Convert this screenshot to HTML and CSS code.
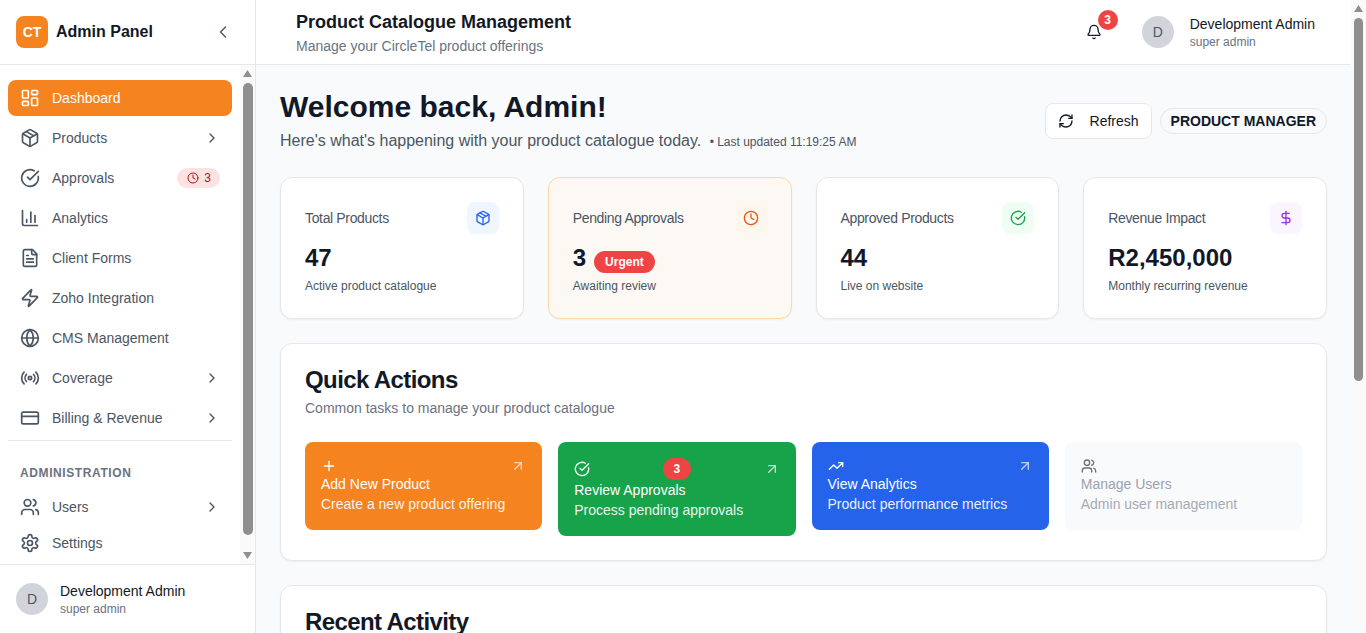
FILE: index.html
```html
<!DOCTYPE html>
<html lang="en">
<head>
  <meta charset="UTF-8">
  <title>Product Catalogue Management</title>
  <link rel="stylesheet" href="styles.css">
</head>
<body>
  <svg class="sprite" xmlns="http://www.w3.org/2000/svg">
    <symbol id="i-dashboard" viewBox="0 0 24 24"><rect x="3" y="3" width="7" height="9" rx="1"/><rect x="14" y="3" width="7" height="5" rx="1"/><rect x="14" y="12" width="7" height="9" rx="1"/><rect x="3" y="16" width="7" height="5" rx="1"/></symbol>
    <symbol id="i-package" viewBox="0 0 24 24"><path d="M11 21.73a2 2 0 0 0 2 0l7-4A2 2 0 0 0 21 16V8a2 2 0 0 0-1-1.73l-7-4a2 2 0 0 0-2 0l-7 4A2 2 0 0 0 3 8v8a2 2 0 0 0 1 1.73z"/><path d="M12 22V12"/><path d="M3.29 7 12 12l8.71-5"/><path d="m7.5 4.27 9 5.15"/></symbol>
    <symbol id="i-check" viewBox="0 0 24 24"><path d="M21.801 10A10 10 0 1 1 17 3.335"/><path d="m9 11 3 3L22 4"/></symbol>
    <symbol id="i-chart" viewBox="0 0 24 24"><path d="M3 3v16a2 2 0 0 0 2 2h16"/><path d="M18 17V9"/><path d="M13 17V5"/><path d="M8 17v-3"/></symbol>
    <symbol id="i-file" viewBox="0 0 24 24"><path d="M15 2H6a2 2 0 0 0-2 2v16a2 2 0 0 0 2 2h12a2 2 0 0 0 2-2V7Z"/><path d="M14 2v4a2 2 0 0 0 2 2h4"/><path d="M10 9H8"/><path d="M16 13H8"/><path d="M16 17H8"/></symbol>
    <symbol id="i-zap" viewBox="0 0 24 24"><path d="M4 14a1 1 0 0 1-.78-1.63l9.9-10.2a.5.5 0 0 1 .86.46l-1.92 6.02A1 1 0 0 0 13 10h7a1 1 0 0 1 .78 1.63l-9.9 10.2a.5.5 0 0 1-.86-.46l1.92-6.02A1 1 0 0 0 11 14z"/></symbol>
    <symbol id="i-globe" viewBox="0 0 24 24"><circle cx="12" cy="12" r="10"/><path d="M12 2a14.5 14.5 0 0 0 0 20 14.5 14.5 0 0 0 0-20"/><path d="M2 12h20"/></symbol>
    <symbol id="i-radio" viewBox="0 0 24 24"><path d="M4.9 19.1C1 15.2 1 8.8 4.9 4.9"/><path d="M7.8 16.2c-2.3-2.3-2.3-6.1 0-8.5"/><circle cx="12" cy="12" r="2"/><path d="M16.2 7.8c2.3 2.3 2.3 6.1 0 8.5"/><path d="M19.1 4.9C23 8.8 23 15.1 19.1 19"/></symbol>
    <symbol id="i-card" viewBox="0 0 24 24"><rect x="2" y="5" width="20" height="14" rx="2"/><path d="M2 10h20"/></symbol>
    <symbol id="i-users" viewBox="0 0 24 24"><path d="M16 21v-2a4 4 0 0 0-4-4H6a4 4 0 0 0-4 4v2"/><circle cx="9" cy="7" r="4"/><path d="M22 21v-2a4 4 0 0 0-3-3.87"/><path d="M16 3.13a4 4 0 0 1 0 7.75"/></symbol>
    <symbol id="i-settings" viewBox="0 0 24 24"><path d="M12.22 2h-.44a2 2 0 0 0-2 2v.18a2 2 0 0 1-1 1.73l-.43.25a2 2 0 0 1-2 0l-.15-.08a2 2 0 0 0-2.73.73l-.22.38a2 2 0 0 0 .73 2.73l.15.1a2 2 0 0 1 1 1.72v.51a2 2 0 0 1-1 1.74l-.15.09a2 2 0 0 0-.73 2.73l.22.38a2 2 0 0 0 2.73.73l.15-.08a2 2 0 0 1 2 0l.43.25a2 2 0 0 1 1 1.73V20a2 2 0 0 0 2 2h.44a2 2 0 0 0 2-2v-.18a2 2 0 0 1 1-1.73l.43-.25a2 2 0 0 1 2 0l.15.08a2 2 0 0 0 2.73-.73l.22-.39a2 2 0 0 0-.73-2.73l-.15-.08a2 2 0 0 1-1-1.74v-.5a2 2 0 0 1 1-1.74l.15-.09a2 2 0 0 0 .73-2.73l-.22-.38a2 2 0 0 0-2.73-.73l-.15.08a2 2 0 0 1-2 0l-.43-.25a2 2 0 0 1-1-1.73V4a2 2 0 0 0-2-2z"/><circle cx="12" cy="12" r="3"/></symbol>
    <symbol id="i-clock" viewBox="0 0 24 24"><circle cx="12" cy="12" r="10"/><path d="M12 6v6l4 2"/></symbol>
    <symbol id="i-refresh" viewBox="0 0 24 24"><path d="M3 12a9 9 0 0 1 9-9 9.75 9.75 0 0 1 6.74 2.74L21 8"/><path d="M21 3v5h-5"/><path d="M21 12a9 9 0 0 1-9 9 9.75 9.75 0 0 1-6.74-2.74L3 16"/><path d="M8 16H3v5"/></symbol>
    <symbol id="i-bell" viewBox="0 0 24 24"><path d="M10.268 21a2 2 0 0 0 3.464 0"/><path d="M3.262 15.326A1 1 0 0 0 4 17h16a1 1 0 0 0 .74-1.673C19.41 13.956 18 12.499 18 8A6 6 0 0 0 6 8c0 4.499-1.411 5.956-2.738 7.326"/></symbol>
    <symbol id="i-dollar" viewBox="0 0 24 24"><path d="M12 2v20"/><path d="M17 5H9.5a3.5 3.5 0 0 0 0 7h5a3.5 3.5 0 0 1 0 7H6"/></symbol>
    <symbol id="i-trend" viewBox="0 0 24 24"><path d="M22 7l-8.5 8.5-5-5L2 17"/><path d="M16 7h6v6"/></symbol>
    <symbol id="i-arrow" viewBox="0 0 24 24"><path d="M7 7h10v10"/><path d="M7 17 17 7"/></symbol>
    <symbol id="i-plus" viewBox="0 0 24 24"><path d="M5 12h14"/><path d="M12 5v14"/></symbol>
    <symbol id="i-right" viewBox="0 0 24 24"><path d="m9 18 6-6-6-6"/></symbol>
    <symbol id="i-left" viewBox="0 0 24 24"><path d="m15 18-6-6 6-6"/></symbol>
  </svg>

  <div class="app">
    <aside class="sidebar">
      <div class="brand">
        <div class="brand-logo">CT</div>
        <div class="brand-name">Admin Panel</div>
        <svg class="icon brand-toggle"><use href="#i-left"/></svg>
      </div>

      <div class="nav-wrap">
        <nav class="nav">
          <a class="nav-item active"><svg class="icon"><use href="#i-dashboard"/></svg><span class="nav-label">Dashboard</span></a>
          <a class="nav-item"><svg class="icon"><use href="#i-package"/></svg><span class="nav-label">Products</span><svg class="icon nav-more"><use href="#i-right"/></svg></a>
          <a class="nav-item"><svg class="icon"><use href="#i-check"/></svg><span class="nav-label">Approvals</span><span class="nav-badge"><svg class="icon"><use href="#i-clock"/></svg>3</span></a>
          <a class="nav-item"><svg class="icon"><use href="#i-chart"/></svg><span class="nav-label">Analytics</span></a>
          <a class="nav-item"><svg class="icon"><use href="#i-file"/></svg><span class="nav-label">Client Forms</span></a>
          <a class="nav-item"><svg class="icon"><use href="#i-zap"/></svg><span class="nav-label">Zoho Integration</span></a>
          <a class="nav-item"><svg class="icon"><use href="#i-globe"/></svg><span class="nav-label">CMS Management</span></a>
          <a class="nav-item"><svg class="icon"><use href="#i-radio"/></svg><span class="nav-label">Coverage</span><svg class="icon nav-more"><use href="#i-right"/></svg></a>
          <a class="nav-item"><svg class="icon"><use href="#i-card"/></svg><span class="nav-label">Billing &amp; Revenue</span><svg class="icon nav-more"><use href="#i-right"/></svg></a>
          <div class="nav-section">
            <div class="nav-heading">ADMINISTRATION</div>
            <a class="nav-item"><svg class="icon"><use href="#i-users"/></svg><span class="nav-label">Users</span><svg class="icon nav-more"><use href="#i-right"/></svg></a>
            <a class="nav-item"><svg class="icon"><use href="#i-settings"/></svg><span class="nav-label">Settings</span></a>
          </div>
        </nav>
        <div class="scrollbar nav-scrollbar">
          <span class="scroll-up"></span>
          <span class="scroll-thumb"></span>
          <span class="scroll-down"></span>
        </div>
      </div>

      <div class="sidebar-user">
        <div class="avatar">D</div>
        <div>
          <div class="user-name">Development Admin</div>
          <div class="user-role">super admin</div>
        </div>
      </div>
    </aside>

    <div class="main">
      <header class="topbar">
        <div>
          <div class="topbar-title">Product Catalogue Management</div>
          <div class="topbar-sub">Manage your CircleTel product offerings</div>
        </div>
        <div class="topbar-right">
          <div class="bell">
            <svg class="icon"><use href="#i-bell"/></svg>
            <span class="bell-count">3</span>
          </div>
          <div class="topbar-user">
            <div class="avatar">D</div>
            <div>
              <div class="user-name">Development Admin</div>
              <div class="user-role">super admin</div>
            </div>
          </div>
        </div>
      </header>

      <main class="content">
        <section class="welcome">
          <div>
            <h1>Welcome back, Admin!</h1>
            <p class="welcome-sub">Here's what's happening with your product catalogue today. <span class="updated">• Last updated 11:19:25 AM</span></p>
          </div>
          <div class="welcome-actions">
            <button class="refresh"><svg class="icon"><use href="#i-refresh"/></svg>Refresh</button>
            <span class="role-pill">PRODUCT MANAGER</span>
          </div>
        </section>

        <section class="stats">
          <div class="stat">
            <div class="stat-top"><span class="stat-label">Total Products</span><span class="stat-icon blue"><svg class="icon"><use href="#i-package"/></svg></span></div>
            <div class="stat-value">47</div>
            <div class="stat-note">Active product catalogue</div>
          </div>
          <div class="stat pending">
            <div class="stat-top"><span class="stat-label">Pending Approvals</span><span class="stat-icon orange"><svg class="icon"><use href="#i-clock"/></svg></span></div>
            <div class="stat-value">3<span class="urgent">Urgent</span></div>
            <div class="stat-note">Awaiting review</div>
          </div>
          <div class="stat">
            <div class="stat-top"><span class="stat-label">Approved Products</span><span class="stat-icon green"><svg class="icon"><use href="#i-check"/></svg></span></div>
            <div class="stat-value">44</div>
            <div class="stat-note">Live on website</div>
          </div>
          <div class="stat">
            <div class="stat-top"><span class="stat-label">Revenue Impact</span><span class="stat-icon purple"><svg class="icon"><use href="#i-dollar"/></svg></span></div>
            <div class="stat-value">R2,450,000</div>
            <div class="stat-note">Monthly recurring revenue</div>
          </div>
        </section>

        <section class="panel">
          <h2>Quick Actions</h2>
          <p class="panel-sub">Common tasks to manage your product catalogue</p>
          <div class="actions">
            <a class="action bg-orange">
              <div class="action-top"><svg class="icon"><use href="#i-plus"/></svg><svg class="icon action-arrow"><use href="#i-arrow"/></svg></div>
              <div class="action-title">Add New Product</div>
              <div class="action-sub">Create a new product offering</div>
            </a>
            <a class="action bg-green">
              <div class="action-top"><svg class="icon"><use href="#i-check"/></svg><span class="action-count">3</span><svg class="icon action-arrow"><use href="#i-arrow"/></svg></div>
              <div class="action-title">Review Approvals</div>
              <div class="action-sub">Process pending approvals</div>
            </a>
            <a class="action bg-blue">
              <div class="action-top"><svg class="icon"><use href="#i-trend"/></svg><svg class="icon action-arrow"><use href="#i-arrow"/></svg></div>
              <div class="action-title">View Analytics</div>
              <div class="action-sub">Product performance metrics</div>
            </a>
            <a class="action disabled">
              <div class="action-top"><svg class="icon"><use href="#i-users"/></svg></div>
              <div class="action-title">Manage Users</div>
              <div class="action-sub">Admin user management</div>
            </a>
          </div>
        </section>

        <section class="panel">
          <h2>Recent Activity</h2>
          <p class="panel-sub">Latest changes across your product catalogue</p>
          <ul class="activity">
            <li><span class="activity-name">Product approved</span><span class="activity-time">2 hours ago</span></li>
            <li><span class="activity-name">Product submitted for review</span><span class="activity-time">5 hours ago</span></li>
            <li><span class="activity-name">Pricing updated</span><span class="activity-time">1 day ago</span></li>
            <li><span class="activity-name">New product created</span><span class="activity-time">2 days ago</span></li>
            <li><span class="activity-name">Client form submitted</span><span class="activity-time">3 days ago</span></li>
            <li><span class="activity-name">Coverage map refreshed</span><span class="activity-time">4 days ago</span></li>
          </ul>
        </section>
      </main>
    </div>
  </div>

  <div class="scrollbar page-scrollbar">
    <span class="scroll-up"></span>
    <span class="scroll-thumb"></span>
  </div>
</body>
</html>
```

FILE: styles.css
```css
* {
  box-sizing: border-box;
}
html, body {
  margin: 0;
  padding: 0;
}
body {
  font-family: "Liberation Sans", Arial, sans-serif;
  font-size: 14px;
  line-height: 20px;
  color: #111827;
  background-color: #f9fafb;
  padding-right: 15px;
}
h1, h2, p, ul {
  margin: 0;
  padding: 0;
}

/* drawn scrollbars, they sit over the page */
.scrollbar {
  width: 15px;
  display: flex;
  flex-direction: column;
  background-color: #fafafa;
}
.page-scrollbar {
  position: fixed;
  top: 0;
  right: 0;
  bottom: 0;
}
.nav-scrollbar {
  position: absolute;
  top: 0;
  right: 0;
  bottom: 0;
}
.scroll-up, .scroll-down {
  width: 9px;
  height: 7px;
  margin: 5px 3px 0;
  flex-shrink: 0;
  background-color: #8f8f8f;
}
.scroll-up {
  clip-path: polygon(50% 0, 100% 100%, 0 100%);
}
.scroll-down {
  margin: auto 3px 5px;
  clip-path: polygon(0 0, 100% 0, 50% 100%);
}
.scroll-thumb {
  width: 9px;
  margin: 6px 3px 0;
  flex-shrink: 0;
  border-radius: 5px;
  background-color: #8f8f8f;
}
.page-scrollbar .scroll-thumb {
  height: 363px;
}
.nav-scrollbar .scroll-thumb {
  height: 452px;
  width: 10px;
}

.sprite {
  display: none;
}
.icon {
  width: 16px;
  height: 16px;
  flex-shrink: 0;
  fill: none;
  stroke: currentColor;
  stroke-width: 2;
  stroke-linecap: round;
  stroke-linejoin: round;
}
.app {
  display: flex;
  align-items: flex-start;
}

/* sidebar */
.sidebar {
  position: sticky;
  top: 0;
  width: 256px;
  height: 100vh;
  flex-shrink: 0;
  display: flex;
  flex-direction: column;
  background-color: #fff;
  border-right: 1px solid #e5e7eb;
}
.brand {
  height: 65px;
  flex-shrink: 0;
  display: flex;
  align-items: center;
  padding: 0 22px 1px 16px;
  border-bottom: 1px solid #e5e7eb;
}
.brand-logo {
  width: 32px;
  height: 32px;
  border-radius: 8px;
  background-color: #f5831f;
  color: #fff;
  font-weight: bold;
  display: flex;
  align-items: center;
  justify-content: center;
}
.brand-name {
  flex: 1;
  margin-left: 8px;
  font-size: 16px;
  font-weight: bold;
}
.brand-toggle {
  width: 20px;
  height: 20px;
  stroke-width: 1.7;
  color: #4b5563;
}
.nav-wrap {
  flex: 1;
  min-height: 0;
  position: relative;
}
.nav {
  height: 100%;
  overflow: hidden;
  padding: 15px 23px 0 8px;
  display: flex;
  flex-direction: column;
  gap: 4px;
}
.nav-item {
  display: flex;
  align-items: center;
  height: 36px;
  flex-shrink: 0;
  padding: 0 12px;
  border-radius: 8px;
  color: #4b5563;
}
.nav-item .icon {
  width: 20px;
  height: 20px;
}
.nav-item.active {
  background-color: #f5831f;
  color: #fff;
}
.nav-label {
  flex: 1;
  margin-left: 12px;
}
.nav-item .nav-more {
  width: 16px;
  height: 16px;
}
.nav-badge {
  display: flex;
  align-items: center;
  gap: 5px;
  height: 20px;
  padding: 0 9px 0 10px;
  border-radius: 10px;
  background-color: #fee2e2;
  color: #991b1b;
  font-size: 12px;
}
.nav-item .nav-badge .icon {
  width: 12px;
  height: 12px;
}
.nav-section {
  border-top: 1px solid #e5e7eb;
  flex-shrink: 0;
}
.nav-heading {
  margin-top: 24px;
  margin-bottom: 8px;
  padding-left: 12px;
  font-size: 12px;
  line-height: 16px;
  font-weight: bold;
  letter-spacing: 0.05em;
  color: #6b7280;
}
.sidebar-user {
  height: 69px;
  flex-shrink: 0;
  display: flex;
  align-items: center;
  gap: 12px;
  padding: 0 16px;
  border-top: 1px solid #e5e7eb;
}
.avatar {
  width: 32px;
  height: 32px;
  flex-shrink: 0;
  border-radius: 50%;
  background-color: #d1d5db;
  color: #4b5563;
  display: flex;
  align-items: center;
  justify-content: center;
}
.user-name {
  color: #111827;
}
.user-role {
  font-size: 12px;
  line-height: 16px;
  color: #6b7280;
}

/* top bar */
.main {
  flex: 1;
  min-width: 0;
}
.topbar {
  height: 65px;
  display: flex;
  align-items: center;
  justify-content: space-between;
  padding: 0 36px 0 40px;
  background-color: #fff;
  border-bottom: 1px solid #e5e7eb;
}
.topbar-title {
  font-size: 18px;
  line-height: 28px;
  font-weight: bold;
}
.topbar-sub {
  color: #6b7280;
}
.topbar-right {
  display: flex;
  align-items: center;
  gap: 40px;
}
.bell {
  position: relative;
  width: 16px;
  height: 16px;
  color: #111827;
}
.bell-count {
  position: absolute;
  top: -14px;
  left: 12px;
  width: 20px;
  height: 20px;
  border-radius: 50%;
  background-color: #ef4444;
  color: #fff;
  font-size: 12px;
  font-weight: bold;
  line-height: 20px;
  text-align: center;
}
.topbar-user {
  display: flex;
  align-items: center;
  gap: 16px;
}

/* content */
.content {
  padding: 24px;
  display: flex;
  flex-direction: column;
  gap: 24px;
}
.welcome {
  display: flex;
  align-items: center;
  justify-content: space-between;
}
h1 {
  font-size: 30px;
  line-height: 36px;
  font-weight: bold;
}
.welcome-sub {
  margin-top: 4px;
  font-size: 16px;
  line-height: 24px;
  color: #4b5563;
}
.updated {
  margin-left: 4px;
  font-size: 12px;
  line-height: 1;
}
.welcome-actions {
  display: flex;
  align-items: center;
  gap: 8px;
}
.refresh {
  display: flex;
  align-items: center;
  gap: 16px;
  height: 36px;
  padding: 0 12px;
  border: 1px solid #e5e7eb;
  border-radius: 8px;
  background-color: #fff;
  color: #111827;
  font: inherit;
}
.role-pill {
  height: 26px;
  padding: 0 10px;
  display: flex;
  align-items: center;
  border: 1px solid #e5e7eb;
  border-radius: 13px;
  font-weight: bold;
}

/* stat cards */
.stats {
  display: grid;
  grid-template-columns: repeat(4, 1fr);
  gap: 24px;
}
.stat {
  padding: 24px;
  border: 1px solid #e5e7eb;
  border-radius: 12px;
  background-color: #fff;
  box-shadow: 0 1px 2px rgba(0, 0, 0, 0.05);
}
.stat.pending {
  background-color: #fcf9f5;
  border-color: #fed7aa;
}
.stat-top {
  display: flex;
  align-items: center;
  justify-content: space-between;
}
.stat-label {
  color: #4b5563;
  letter-spacing: -0.025em;
}
.stat-icon {
  width: 32px;
  height: 32px;
  border-radius: 8px;
  display: flex;
  align-items: center;
  justify-content: center;
}
.stat-icon.blue { background-color: #eff6ff; color: #2563eb; }
.stat-icon.orange { background-color: #fff7ed; color: #ea580c; }
.stat-icon.green { background-color: #f0fdf4; color: #16a34a; }
.stat-icon.purple { background-color: #faf5ff; color: #9333ea; }
.stat-value {
  margin-top: 8px;
  font-size: 24px;
  line-height: 32px;
  font-weight: bold;
  display: flex;
  align-items: center;
}
.urgent {
  margin-left: 8px;
  margin-top: 8px;
  padding: 0 11px;
  height: 22px;
  border-radius: 11px;
  background-color: #ef4444;
  color: #fff;
  font-size: 12px;
  line-height: 22px;
}
.stat-note {
  margin-top: 4px;
  font-size: 12px;
  line-height: 16px;
  color: #4b5563;
}

/* panels */
.panel {
  padding: 24px;
  border: 1px solid #e5e7eb;
  border-radius: 12px;
  background-color: #fff;
  box-shadow: 0 1px 2px rgba(0, 0, 0, 0.05);
}
h2 {
  font-size: 24px;
  line-height: 24px;
  font-weight: bold;
  letter-spacing: -0.025em;
}
.panel-sub {
  margin-top: 6px;
  color: #6b7280;
}
.actions {
  margin-top: 24px;
  display: grid;
  grid-template-columns: repeat(4, 1fr);
  gap: 16px;
  align-items: start;
}
.action {
  padding: 16px;
  border-radius: 8px;
  color: #fff;
  display: block;
}
.bg-orange { background-color: #f5831f; }
.bg-green { background-color: #16a34a; }
.bg-blue { background-color: #2563eb; }
.action.disabled {
  background-color: #f9fafb;
  color: #9ca3af;
}
.action.disabled .icon {
  color: #6b7280;
}
.action-top {
  display: flex;
  align-items: center;
  justify-content: space-between;
}
.action-arrow {
  opacity: 0.7;
}
.action-count {
  min-width: 28px;
  height: 22px;
  border-radius: 11px;
  background-color: #ef4444;
  font-size: 12px;
  font-weight: bold;
  line-height: 22px;
  text-align: center;
}
.action-sub {
  opacity: 0.9;
}
.activity {
  margin-top: 24px;
  list-style: none;
}
.activity li {
  display: flex;
  justify-content: space-between;
  padding: 15.5px 0;
  border-top: 1px solid #e5e7eb;
}
.activity-time {
  color: #6b7280;
  font-size: 12px;
}
```
